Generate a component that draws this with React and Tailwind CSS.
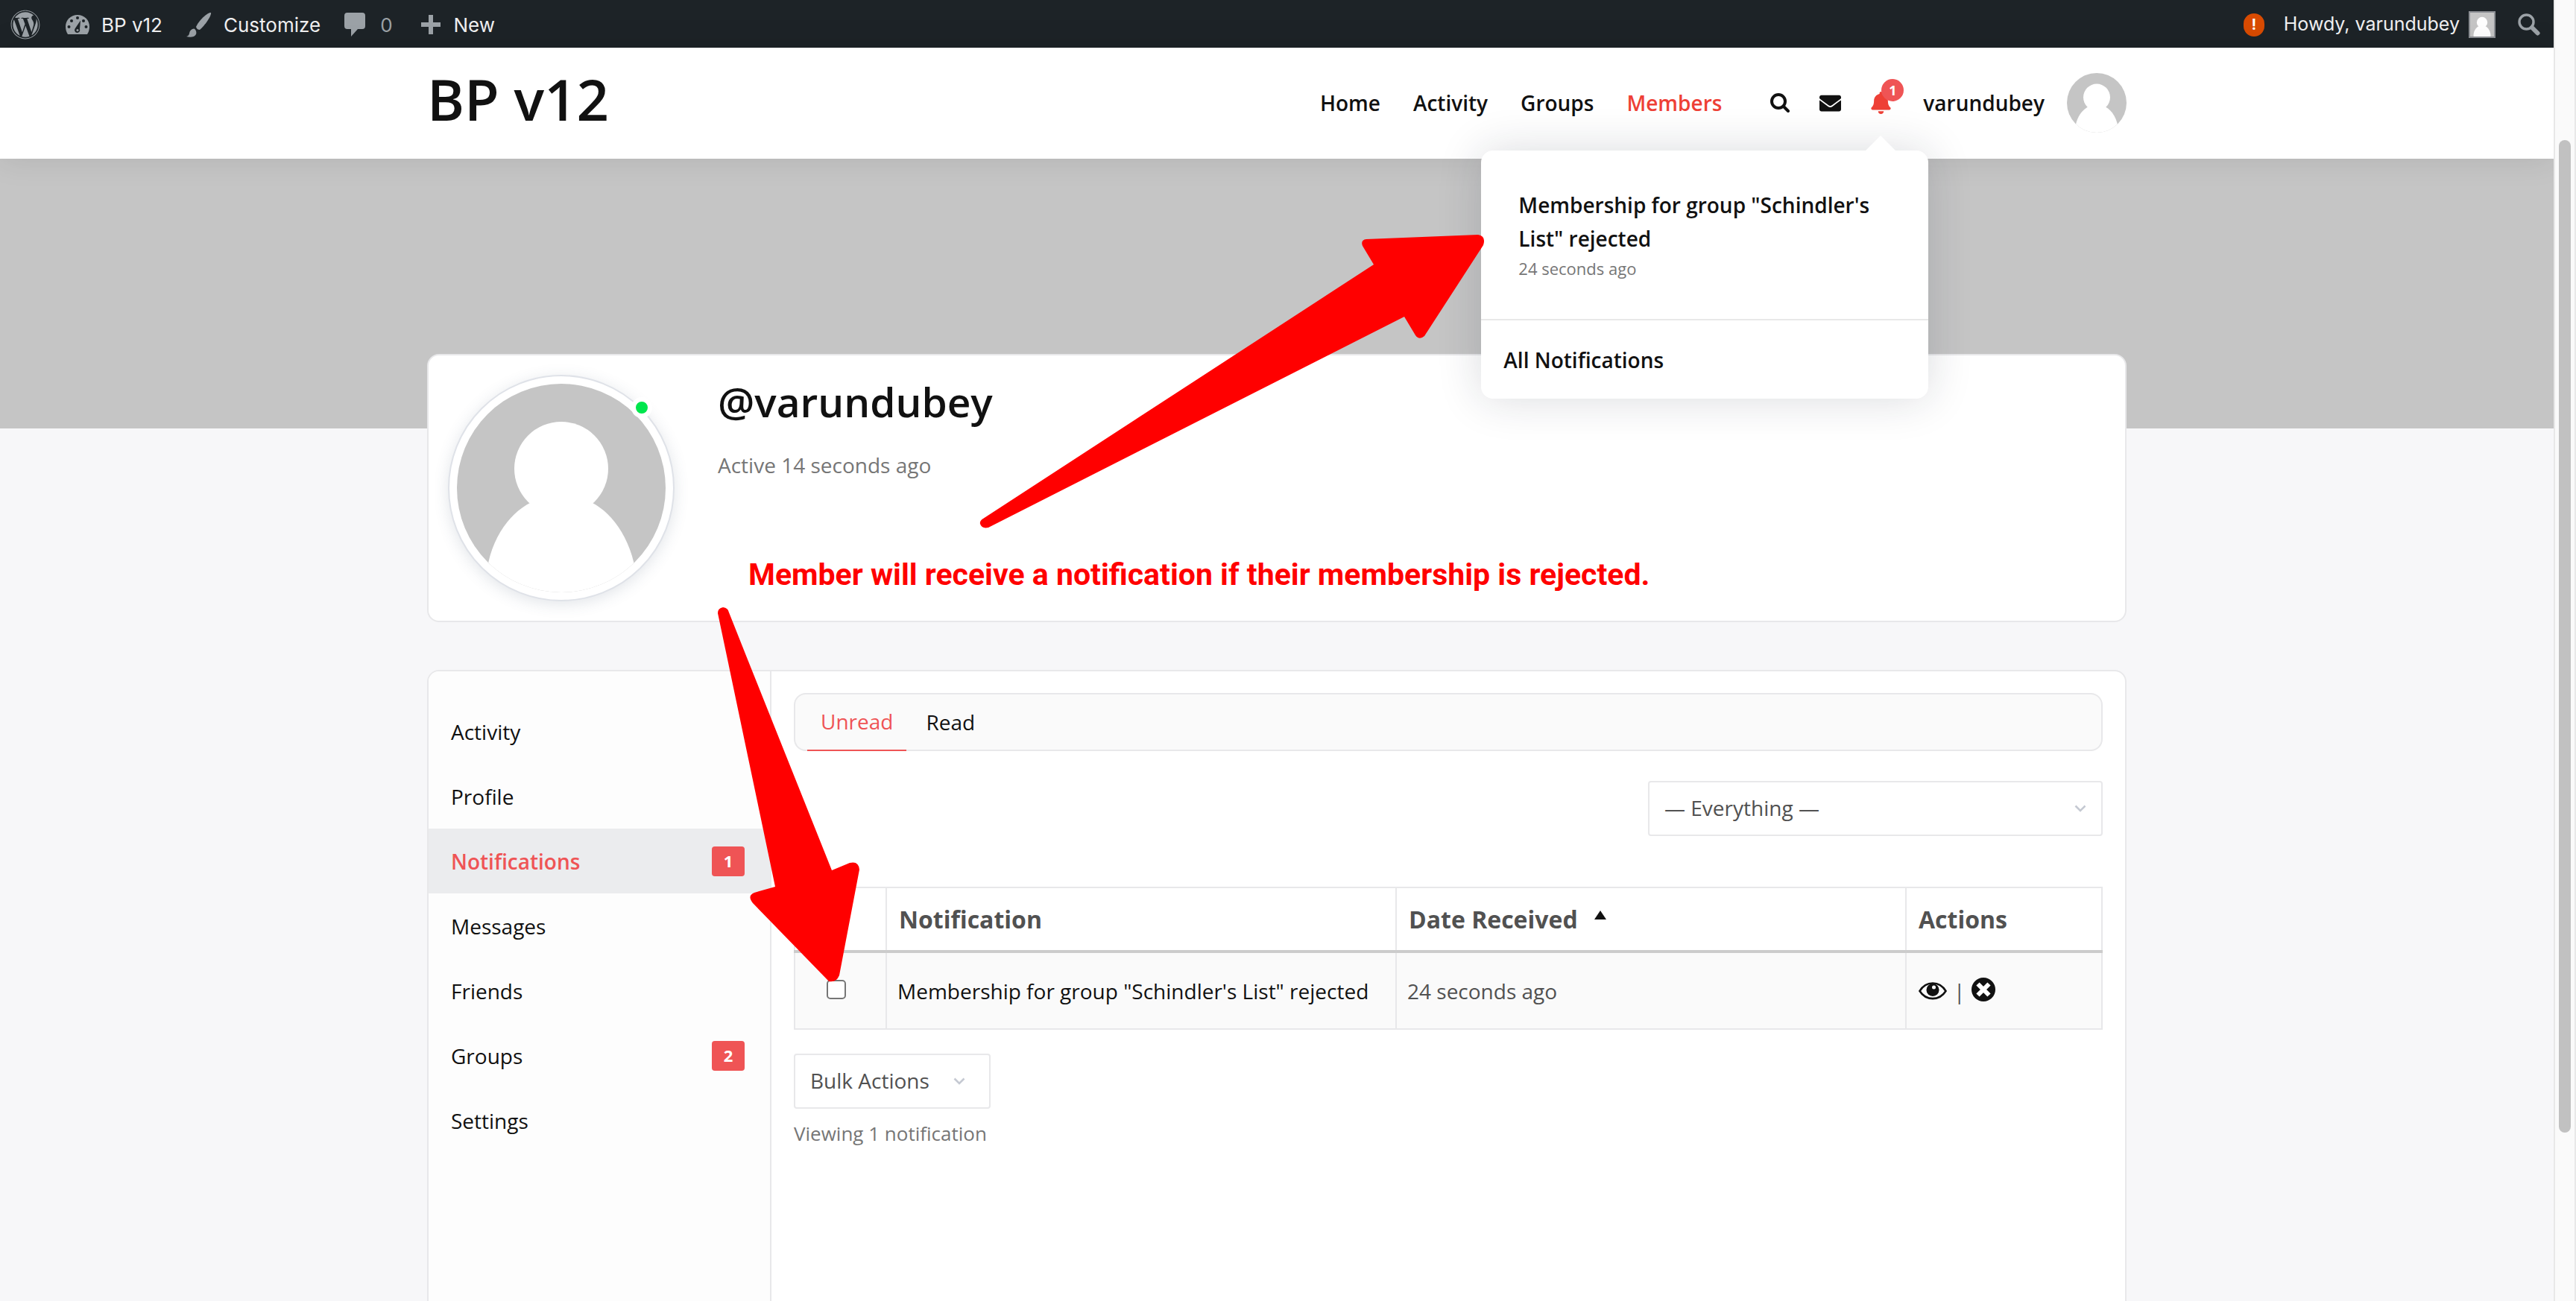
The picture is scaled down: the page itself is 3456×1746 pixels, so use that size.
import React from "react";
import { FaEnvelope, FaBell, FaWordpress } from "react-icons/fa";

const NAV = ["Home", "Activity", "Groups", "Members"];
const SIDE = [
  { label: "Activity" },
  { label: "Profile" },
  { label: "Notifications", count: 1, active: true },
  { label: "Messages" },
  { label: "Friends" },
  { label: "Groups", count: 2 },
  { label: "Settings" },
];

function Person({ className }) {
  return (
    <svg viewBox="0 0 280 280" className={className} aria-hidden="true">
      <rect width="280" height="280" fill="#c5c5c5" />
      <circle cx="140" cy="114" r="63" fill="#fff" />
      <path d="M110 155 C80 164 46 200 40 254 L40 280 L240 280 L240 254 C232 200 200 164 170 155 Z" fill="#fff" />
    </svg>
  );
}

function Chevron({ className }) {
  return (
    <svg viewBox="0 0 16 10" className={"pointer-events-none absolute top-[32px] h-[10px] w-4 " + className} aria-hidden="true">
      <path d="M1.5 1.5 L8 8 L14.5 1.5" fill="none" stroke="#c5c9d2" strokeWidth="2.6" />
    </svg>
  );
}

function Dashboard() {
  return (
    <svg viewBox="0 0 32 28" className="h-7 w-8" aria-hidden="true">
      <path d="M16 1 C7 1 0 8 0 16.500 C0 20.500 1 24 3 27 H29 C31 24 32 20.500 32 16.500 C32 8 25 1 16 1 Z" fill="#9ca2a7" />
      <g fill="#1d2327">
        <circle cx="16" cy="5" r="2" />
        <circle cx="8" cy="9" r="2" />
        <circle cx="24" cy="9" r="2" />
        <circle cx="4.500" cy="17" r="2" />
        <circle cx="27.500" cy="17" r="2" />
        <path d="M20 8.500 L19 20 A3.600 3.600 0 1 1 12.600 19.500 Z" />
      </g>
      <circle cx="16" cy="21.500" r="1.500" fill="#9ca2a7" />
    </svg>
  );
}

function AdminBar() {
  return (
    <div className="flex h-16 items-center bg-[#1d2327] pl-[14px] pr-[18px] pt-[2px] font-[Inter,sans-serif] text-[26px] text-[#f0f0f1]">
      <a href="#wp" aria-label="About WordPress"><FaWordpress className="size-10 text-[#9ca2a7]" /></a>
      <a href="#site" className="ml-[34px] flex items-center gap-4"><Dashboard />BP v12</a>
      <a href="#customize" className="ml-8 flex items-center gap-4">
        <svg viewBox="0 0 34 34" className="size-[34px]" fill="#9ca2a7" aria-hidden="true">
          <path d="M33 1 C29 0 17 11 13 20 C14 23 16 24 18 24 C25 18 34 5 33 1 Z" />
          <path d="M10.500 22.500 C6 23 4.500 26 4 29 C3.500 31.500 2 32.500 0 33 C5 34.500 11 34 13 30 C14 27.500 13 24 10.500 22.500 Z" />
        </svg>
        Customize
      </a>
      <a href="#comments" className="ml-8 flex items-center gap-5 text-[#9ca2a7]">
        <svg viewBox="0 0 28 32" className="h-8 w-7" fill="#9ca2a7" aria-hidden="true">
          <path d="M4 0 H24 Q28 0 28 4 V18 Q28 22 24 22 H18 L9 32 V22 H4 Q0 22 0 18 V4 Q0 0 4 0 Z" />
        </svg>
        0
      </a>
      <a href="#new" className="ml-[38px] flex items-center gap-[18px]">
        <svg viewBox="0 0 26 26" className="size-[26px]" fill="#9ca2a7" aria-hidden="true">
          <path d="M10 0 h6 v10 h10 v6 h-10 v10 h-6 v-10 h-10 v-6 h10 Z" />
        </svg>
        New
      </a>
      <a href="#issues" aria-label="Issues" className="ml-auto flex h-[31px] w-7 items-center justify-center rounded-full bg-[#d94b02] text-[20px] font-bold text-white">!</a>
      <a href="#account" className="ml-[26px] flex items-center gap-3 text-[25px]">
        Howdy, varundubey
        <Person className="size-9 border-2 border-[#8c8f94]" />
      </a>
      <button aria-label="Search site" className="ml-[30px]">
        <svg viewBox="0 0 30 30" className="size-[30px]" aria-hidden="true">
          <circle cx="11.500" cy="11.500" r="9.500" fill="none" stroke="#9ca2a7" strokeWidth="3.400" />
          <path d="M19 19 L26.500 26.500" stroke="#9ca2a7" strokeWidth="6" strokeLinecap="round" />
        </svg>
      </button>
    </div>
  );
}

function NotificationMenu() {
  return (
    <div className="absolute -right-[50px] top-[79px] w-[600px] rounded-2xl bg-white text-[28px] font-semibold text-[#111] shadow-[0_0_60px_rgba(25,30,50,0.16)]">
      <svg viewBox="0 0 40 20" className="absolute -top-5 right-11 h-5 w-10" aria-hidden="true">
        <path d="M20 0 L40 20 H0 Z" fill="#fff" />
      </svg>
      <a href="#n1" className="block border-b-2 border-[#e8e8e8] px-[50px] pb-[50px] pt-[51px]">
        <p className="leading-[45px]">Membership for group "Schindler's List" rejected</p>
        <p className="text-[22px] font-normal leading-[35px] text-[#767676]">24 seconds ago</p>
      </a>
      <a href="#all" className="block px-[30px] pb-[30px] pt-[31px] leading-[44px]">All Notifications</a>
    </div>
  );
}

function Header() {
  return (
    <header className="relative z-10 h-[149px] bg-white shadow-[0_0_40px_rgba(0,0,0,0.10)]">
      <div className="mx-auto flex w-[2280px] max-w-full items-start justify-between">
        <a href="#home" className="text-[76px] font-semibold leading-[138px] text-[#111]">BP v12</a>
        <nav className="flex items-center pt-[34px] text-[28px] font-semibold text-[#111]">
          <div className="flex gap-11">
            {NAV.map((n) => (
              <a key={n} href={"#" + n} className={n === "Members" ? "text-[#ee4036]" : ""}>{n}</a>
            ))}
          </div>
          <button aria-label="Search" className="ml-[65px]">
            <svg viewBox="0 0 26 26" className="size-[26px]" fill="none" stroke="#111" strokeLinecap="round" aria-hidden="true">
              <circle cx="11" cy="11" r="9" strokeWidth="4" />
              <path d="M18 18 L24 24" strokeWidth="4" />
            </svg>
          </button>
          <a href="#messages" aria-label="Messages" className="ml-10"><FaEnvelope className="size-[29px]" /></a>
          <div className="relative ml-10 flex">
            <button aria-label="Notifications"><FaBell className="h-[30px] w-[27px] text-[#ee4036]" /></button>
            <span className="absolute -right-[17px] -top-[17px] flex size-[30px] items-center justify-center rounded-full bg-[#ef5455] text-[18px] font-bold text-white">1</span>
            <NotificationMenu />
          </div>
          <a href="#me" className="ml-[43px] flex items-center gap-[30px]">varundubey<Person className="size-20 rounded-full" /></a>
        </nav>
      </div>
    </header>
  );
}

function ProfileCard() {
  return (
    <section className="mt-[-100px] flex h-[360px] rounded-2xl border-2 border-[#e8e8ea] bg-white pl-[26px] pt-[26px]">
      <div className="relative size-[304px] shrink-0 rounded-full border-2 border-[#dfe2e8] bg-white p-[10px] shadow-[0_4px_20px_rgba(60,80,110,0.15)]">
        <Person className="size-full rounded-full" />
        <span className="absolute right-[28px] top-[28px] size-7 rounded-full border-[6px] border-white bg-[#00e64d]" />
      </div>
      <div className="pl-[58px]">
        <h1 className="text-[55px] font-semibold leading-[72px] text-[#111]">@varundubey</h1>
        <p className="mt-[5px] text-[28px] leading-[88px] text-[#767676]">Active 14 seconds ago</p>
      </div>
    </section>
  );
}

function Sidebar() {
  return (
    <nav className="w-[460px] shrink-0 border-r-2 border-[#e8e8ea] bg-[#fdfdfd] pt-[37px] text-[28px] text-[#111]">
      {SIDE.map((s) => (
        <a key={s.label} href={"#" + s.label} className={s.active ? "flex h-[87px] items-center justify-between bg-[#ebecee] pl-[30px] pr-[34px] font-semibold text-[#ef5455]" : "flex h-[87px] items-center justify-between pl-[30px] pr-[34px]"}>
          {s.label}
          {s.count && (
            <span className="flex h-10 w-11 items-center justify-center rounded bg-[#ef5455] text-[22px] font-bold text-white">{s.count}</span>
          )}
        </a>
      ))}
    </nav>
  );
}

function Eye() {
  return (
    <svg viewBox="0 0 38 24" className="h-6 w-[38px]" aria-hidden="true">
      <path d="M1.500 12 C10 -2 28 -2 36.500 12 C28 25.500 10 25.500 1.500 12 Z" fill="none" stroke="#111" strokeWidth="2.600" />
      <circle cx="19" cy="10.500" r="8.500" fill="#111" />
      <circle cx="20.500" cy="7" r="2.500" fill="#fff" />
    </svg>
  );
}

function Delete() {
  return (
    <svg viewBox="0 0 32 32" className="size-8" aria-hidden="true">
      <circle cx="16" cy="16" r="16" fill="#111" />
      <path d="M8.500 8.500 L23.500 23.500 M23.500 8.500 L8.500 23.500" stroke="#fff" strokeWidth="6" />
    </svg>
  );
}

const TH = "border-2 border-b-4 border-[#e8e8ea] border-b-[#ccc] px-4 text-left text-[32px] font-bold";
const TD = "border-2 border-[#e8e8ea] px-[14px]";
const SELECT = "h-[74px] w-full appearance-none rounded border-2 border-[#e8e8ea] bg-white px-5 pb-[2px] text-[28px] text-[#515151]";

function Content() {
  return (
    <main className="min-w-0 grow px-[30px] pt-[29px] text-[28px] text-[#515151]">
      <div className="flex h-[78px] items-stretch gap-2 rounded-2xl border-2 border-[#e8e8ea] bg-[#fafafa] px-4 font-medium">
        <button className="-mb-[2px] border-b-2 border-[#ef5455] px-[18px] pb-[2px] text-[#ef5455]">Unread</button>
        <button className="px-[18px] text-[#111]">Read</button>
      </div>
      <div className="mt-10 flex justify-end">
        <div className="relative w-[610px]">
          <select aria-label="Filter notifications" className={SELECT}><option>— Everything —</option></select>
          <Chevron className="right-[22px]" />
        </div>
      </div>
      <table className="mt-[68px] w-full table-fixed border-collapse">
        <colgroup>
          <col className="w-[123px]" />
          <col />
          <col />
          <col className="w-[263px]" />
        </colgroup>
        <thead>
          <tr className="h-[86px]">
            <th className={TH}></th>
            <th className={TH}>Notification</th>
            <th className={TH}>
              <a href="#sort" className="flex items-center gap-[22px]">
                Date Received
                <svg viewBox="0 0 16 12" className="mb-3 h-3 w-4" aria-hidden="true"><path d="M8 0 L16 12 H0 Z" fill="#111" /></svg>
              </a>
            </th>
            <th className={TH}>Actions</th>
          </tr>
        </thead>
        <tbody>
          <tr className="h-[104px] bg-[#fafafa]">
            <td className="border-2 border-[#e8e8ea] pb-1 pl-[42px]">
              <input type="checkbox" aria-label="Select notification" className="block size-[26px] appearance-none rounded-[5px] border-2 border-[#767676] bg-white" />
            </td>
            <td className={TD}><a href="#n1" className="text-[#111]">Membership for group "Schindler's List" rejected</a></td>
            <td className={TD}>24 seconds ago</td>
            <td className="border-2 border-[#e8e8ea] px-4">
              <div className="flex items-center">
                <a href="#read" aria-label="Mark read"><Eye /></a>
                <span className="mx-[9px]">|</span>
                <a href="#delete" aria-label="Delete" className="pb-[3px]"><Delete /></a>
              </div>
            </td>
          </tr>
        </tbody>
      </table>
      <div className="relative mt-8 w-[264px]">
        <select aria-label="Bulk actions" className={SELECT}><option>Bulk Actions</option></select>
        <Chevron className="right-[34px]" />
      </div>
      <p className="mt-[15px] text-[26px] leading-9 text-[#767676]">Viewing 1 notification</p>
    </main>
  );
}

function Annotations() {
  return (
    <>
      <svg viewBox="0 0 1060 1020" className="pointer-events-none absolute left-[950px] top-[305px] z-20 h-[1020px] w-[1060px]" fill="#f00" aria-hidden="true">
        <path d="M369 391 L893 50 L878 25 Q875 17 883 16 L1033 10 Q1044 12 1040 24 L961 146 Q954 152 949 145 L934 120 L376 403 Q367 405 365 398 Q364 394 369 391 Z" />
        <path d="M13 518 Q13 511 20 510 Q27 511 28 517 L51 575 L166 863 L190 853 Q202 850 203 862 L176 1004 Q172 1014 162 1012 L60 907 Q52 897 62 893 L90 885 L25 575 Z" />
      </svg>
      <p className="pointer-events-none absolute left-[1004px] top-[745px] z-20 whitespace-nowrap font-[Roboto,sans-serif] text-[41px] font-bold leading-[52px] text-[#f00]">
        Member will receive a notification if their membership is rejected.
      </p>
    </>
  );
}

export default function App() {
  return (
    <div className="relative flex h-screen overflow-hidden bg-[#f7f7f9] font-['Open_Sans',sans-serif]">
      <div className="min-w-0 grow overflow-hidden">
        <AdminBar />
        <Header />
        <div className="h-[362px] bg-[#c5c5c5]" />
        <div className="mx-auto w-[2280px] max-w-full">
          <ProfileCard />
          <section className="mt-16 flex min-h-[1000px] overflow-hidden rounded-t-2xl border-2 border-[#e8e8ea] bg-white">
            <Sidebar />
            <Content />
          </section>
        </div>
      </div>
      <div className="flex w-[30px] shrink-0 justify-center border-x-2 border-[#e8e8e8] bg-[#fafafa] pt-[188px]">
        <div className="h-[1332px] w-4 rounded-full bg-[#c1c1c1]" />
      </div>
      <Annotations />
    </div>
  );
}
